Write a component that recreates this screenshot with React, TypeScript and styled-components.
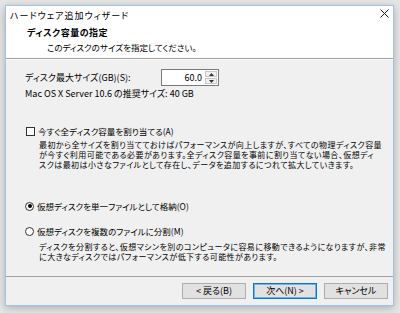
import styled, { createGlobalStyle } from "styled-components";

const GlobalStyle = createGlobalStyle`
  html, body {
    margin: 0;
    padding: 0;
    background: #e6e6e6;
  }
  body {
    font-family: "Noto Sans CJK JP", "Noto Sans", sans-serif;
    font-size: 9px;
    color: #000;
    font-feature-settings: "palt";
  }
`;

const Screen = styled.div`
  width: 400px;
  height: 313px;
  padding: 5px 0 0 5px;
  box-sizing: border-box;
  overflow: hidden;
`;

const Window = styled.div`
  width: 389px;
  height: 301px;
  box-sizing: border-box;
  border: 1px solid #9fc3e6;
  box-shadow: 0 2px 8px rgba(0, 0, 0, 0.25);
  display: flex;
  flex-direction: column;
  background: #f0f0f0;
`;

const TitleBar = styled.div`
  height: 19px;
  background: #fff;
  display: flex;
  align-items: center;
  justify-content: space-between;
  padding-left: 4px;
`;

const TitleText = styled.span`
  font-size: 9px;
  line-height: 12px;
  letter-spacing: 1px;
`;

const CloseButton = styled.div`
  width: 18px;
  height: 16px;
  margin-top: -4px;
  display: flex;
  align-items: center;
  justify-content: center;
`;

const Header = styled.div`
  background: #fff;
  padding: 2px 0 5px 21px;
  border-bottom: 1px solid #a0a0a0;
  display: flex;
  flex-direction: column;
  gap: 2px;
`;

const HeaderTitle = styled.div`
  font-weight: bold;
  line-height: 12px;
  letter-spacing: 0.5px;
`;

const HeaderSub = styled.div`
  font-size: 8.5px;
  line-height: 12px;
  padding-left: 20px;
`;

const Body = styled.div`
  flex: 1;
  padding: 9px 0 0 19px;
  border-top: 1px solid #fff;
  display: flex;
  flex-direction: column;
`;

const FieldRow = styled.div`
  display: flex;
  align-items: center;
  height: 17px;
`;

const FieldLabel = styled.span`
  width: 136px;
`;

const SpinBox = styled.div`
  width: 58px;
  height: 17px;
  box-sizing: border-box;
  border: 1px solid #7a7a7a;
  background: #fff;
  display: flex;
`;

const SpinValue = styled.span`
  flex: 1;
  text-align: right;
  padding-right: 3px;
  line-height: 15px;
`;

const SpinButtons = styled.div`
  width: 12px;
  display: flex;
  flex-direction: column;
  padding: 1px 1px 1px 0;
  gap: 1px;
`;

const SpinArrow = styled.div`
  flex: 1;
  background: #f0f0f0;
  border: 1px solid #c8c8c8;
  display: flex;
  align-items: center;
  justify-content: center;
`;

const Line = styled.div<{ $top: number; $small?: boolean }>`
  margin-top: ${({ $top }) => $top}px;
  font-size: ${({ $small }) => ($small ? "8.5px" : "9px")};
  line-height: 12px;
  display: flex;
  align-items: center;
  white-space: nowrap;
`;

const CheckBox = styled.span`
  width: 9px;
  height: 9px;
  box-sizing: border-box;
  border: 1px solid #333;
  background: #fff;
  margin: 0 3px 0 1px;
`;

const Radio = styled.span<{ $checked?: boolean }>`
  width: 9px;
  height: 9px;
  box-sizing: border-box;
  border: 1px solid #333;
  border-radius: 50%;
  background: #fff;
  margin: 0 3px 0 0;
  display: flex;
  align-items: center;
  justify-content: center;

  &::after {
    content: "";
    width: 4px;
    height: 4px;
    border-radius: 50%;
    background: ${({ $checked }) => ($checked ? "#000" : "transparent")};
  }
`;

const Note = styled.p<{ $top: number }>`
  margin: ${({ $top }) => $top}px 0 0 14px;
  font-size: 8px;
  letter-spacing: 0.43px;
  line-height: 10px;
  white-space: nowrap;
`;

const Footer = styled.div`
  border-top: 1px solid #a0a0a0;
  display: flex;
  justify-content: flex-end;
  gap: 7px;
  padding: 6px 5px 6px 0;
`;

const Button = styled.div<{ $default?: boolean }>`
  width: 64px;
  height: 16px;
  box-sizing: border-box;
  background: #e1e1e1;
  border: 1px solid ${({ $default }) => ($default ? "#0078d7" : "#adadad")};
  box-shadow: ${({ $default }) =>
    $default ? "inset 0 0 0 1px rgba(0, 120, 215, 0.45)" : "none"};
  display: flex;
  align-items: center;
  justify-content: center;
  line-height: 12px;
`;

const Arrow = ({ up }: { up?: boolean }) => (
  <svg width="5" height="3" viewBox="0 0 5 3">
    <path d={up ? "M0 3 L2.5 0 L5 3 Z" : "M0 0 L2.5 3 L5 0 Z"} fill="#333" />
  </svg>
);

export default function App() {
  return (
    <>
      <GlobalStyle />
      <Screen>
        <Window>
          <TitleBar>
            <TitleText>ハードウェア追加ウィザード</TitleText>
            <CloseButton>
              <svg width="9" height="9" viewBox="0 0 9 9">
                <path d="M0.5 0.5 L8.5 8.5 M8.5 0.5 L0.5 8.5" stroke="#111" strokeWidth="1" />
              </svg>
            </CloseButton>
          </TitleBar>
          <Header>
            <HeaderTitle>ディスク容量の指定</HeaderTitle>
            <HeaderSub>このディスクのサイズを指定してください。</HeaderSub>
          </Header>
          <Body>
            <FieldRow>
              <FieldLabel>ディスク最大サイズ(GB)(S):</FieldLabel>
              <SpinBox>
                <SpinValue>60.0</SpinValue>
                <SpinButtons>
                  <SpinArrow>
                    <Arrow up />
                  </SpinArrow>
                  <SpinArrow>
                    <Arrow />
                  </SpinArrow>
                </SpinButtons>
              </SpinBox>
            </FieldRow>
            <Line $top={2}>Mac OS X Server 10.6 の推奨サイズ: 40 GB</Line>

            <Line $top={25} $small>
              <CheckBox />
              今すぐ全ディスク容量を割り当てる(A)
            </Line>
            <Note $top={3}>
              最初から全サイズを割り当てておけばパフォーマンスが向上しますが、すべての物理ディスク容量
              <br />
              が今すぐ利用可能である必要があります。全ディスク容量を事前に割り当てない場合、仮想ディ
              <br />
              スクは最初は小さなファイルとして存在し、データを追加するにつれて拡大していきます。
            </Note>

            <Line $top={30} $small>
              <Radio $checked />
              仮想ディスクを単一ファイルとして格納(O)
            </Line>
            <Line $top={13} $small>
              <Radio />
              仮想ディスクを複数のファイルに分割(M)
            </Line>
            <Note $top={5}>
              ディスクを分割すると、仮想マシンを別のコンピュータに容易に移動できるようになりますが、非常
              <br />
              に大きなディスクではパフォーマンスが低下する可能性があります。
            </Note>
          </Body>
          <Footer>
            <Button>&lt; 戻る(B)</Button>
            <Button $default>次へ(N) &gt;</Button>
            <Button>キャンセル</Button>
          </Footer>
        </Window>
      </Screen>
    </>
  );
}
